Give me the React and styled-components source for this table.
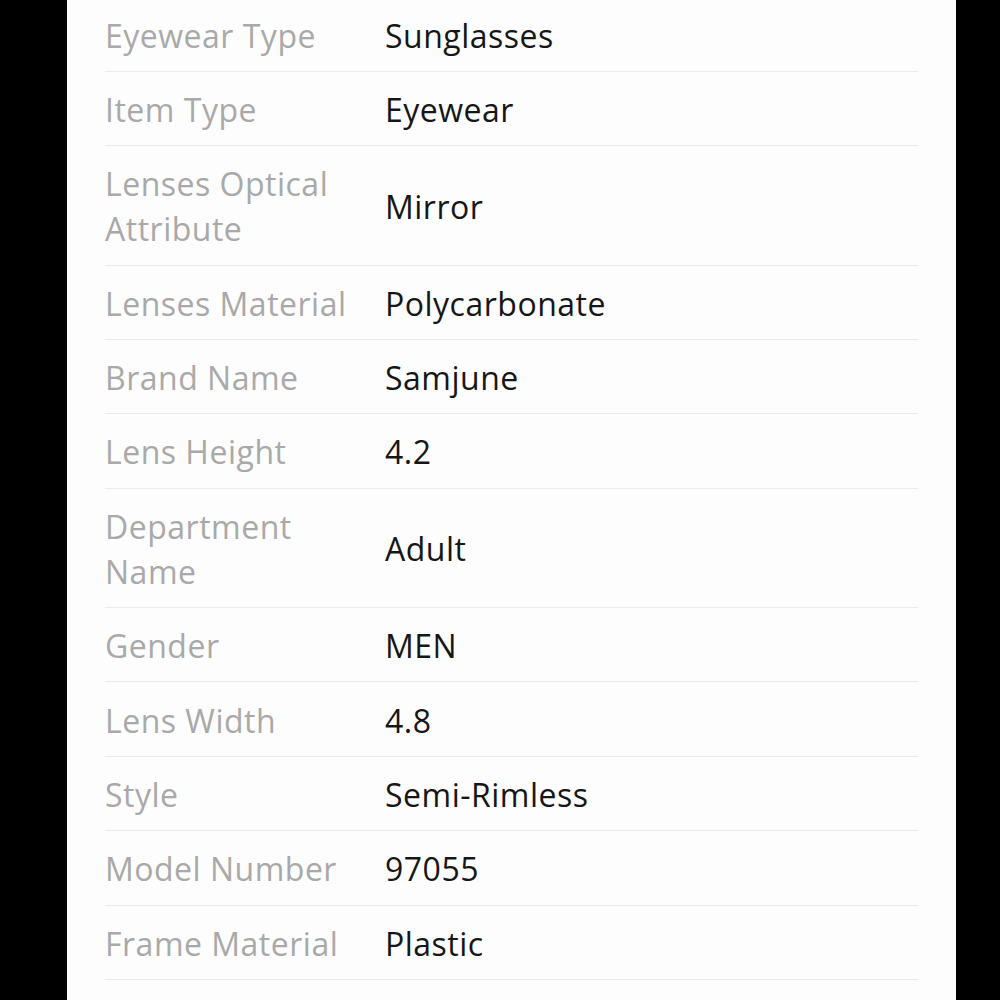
import React from "react";
import styled, { createGlobalStyle } from "styled-components";

const Global = createGlobalStyle`
  html, body { margin: 0; padding: 0; background: #000; }
  body { font-family: "Open Sans", "Noto Sans", sans-serif; }
`;

const Page = styled.div`
  width: 1000px;
  height: 1000px;
  background: #000;
  overflow: hidden;
  display: flex;
  justify-content: flex-start;
`;

const Panel = styled.div`
  margin-left: 67px;
  width: 889px;
  height: 1000px;
  background: #fdfdfd;
  padding: 0 38px;
  box-sizing: border-box;
`;

const List = styled.dl`
  margin: -2.6px 0 0 0;
  padding: 0;
`;

const Row = styled.div`
  display: grid;
  grid-template-columns: 260px 1fr;
  column-gap: 20px;
  align-items: center;
  padding: 15.2px 0 13.2px;
  border-bottom: 1px solid #ebebeb;
`;

const Label = styled.dt`
  margin: 0;
  font-size: 32px;
  line-height: 45px;
  color: #a9a9a9;
  letter-spacing: 0.5px;
`;

const Value = styled.dd`
  margin: 0;
  font-size: 32px;
  line-height: 45px;
  color: #161616;
  letter-spacing: 0.5px;
`;

const rows = [
  ["Eyewear Type", "Sunglasses"],
  ["Item Type", "Eyewear"],
  ["Lenses Optical Attribute", "Mirror"],
  ["Lenses Material", "Polycarbonate"],
  ["Brand Name", "Samjune"],
  ["Lens Height", "4.2"],
  ["Department Name", "Adult"],
  ["Gender", "MEN"],
  ["Lens Width", "4.8"],
  ["Style", "Semi-Rimless"],
  ["Model Number", "97055"],
  ["Frame Material", "Plastic"],
];

export default function App() {
  return (
    <>
      <Global />
      <Page>
        <Panel>
          <List>
            {rows.map(([k, v]) => (
              <Row key={k}>
                <Label>{k}</Label>
                <Value>{v}</Value>
              </Row>
            ))}
          </List>
        </Panel>
      </Page>
    </>
  );
}
